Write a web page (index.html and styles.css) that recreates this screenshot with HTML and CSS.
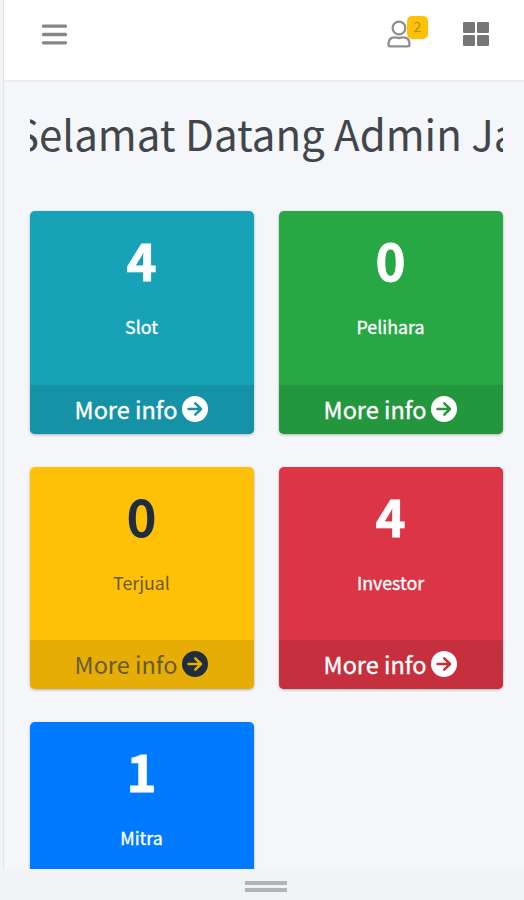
FILE: index.html
```html
<!DOCTYPE html>
<html lang="id">
<head>
<meta charset="utf-8">
<title>Dashboard Admin</title>
<link rel="stylesheet" href="styles.css">
</head>
<body>
<svg class="defs" width="0" height="0" aria-hidden="true">
  <symbol id="arrow" viewBox="0 0 26 26">
    <circle cx="13" cy="13" r="13" fill="currentColor"/>
    <path d="M6.500 13H18.500M13.300 7.300L19 13L13.300 18.700" fill="none" stroke="var(--foot)" stroke-width="2.5" stroke-linecap="round" stroke-linejoin="round"/>
  </symbol>
</svg>
<div class="screen">
  <header class="navbar">
    <svg class="menu" viewBox="0 0 24 22"><path d="M1.5 3H22.5M1.5 11H22.5M1.5 19H22.5" stroke="#868686" stroke-width="3.2" stroke-linecap="round"/></svg>
    <div class="actions">
      <div class="user">
        <svg viewBox="0 0 24 28"><g fill="none" stroke="#8f8f8f" stroke-width="2.3"><circle cx="12" cy="8" r="6.4"/><path d="M1.5 24.5C1.5 19.5 4 17.3 7.5 17.3C9.5 17.3 10 18 12 18C14 18 14.500 17.300 16.500 17.300C20 17.300 22.500 19.500 22.500 24.500Q22.500 26.300 20.700 26.300H3.300Q1.500 26.300 1.500 24.500Z"/></g></svg>
        <span class="badge">2</span>
      </div>
      <svg class="grid-icon" viewBox="0 0 26 24"><g fill="#777"><rect width="12" height="11" rx="1.200"/><rect x="14" width="12" height="11" rx="1.200"/><rect y="13" width="12" height="11" rx="1.200"/><rect x="14" y="13" width="12" height="11" rx="1.200"/></g></svg>
    </div>
  </header>
  <main class="content">
    <div class="marquee"><span>Selamat Datang Admin Ja</span></div>
    <div class="cards">
      <section class="card info"><div class="inner"><h3>4</h3><p>Slot</p></div><a class="more">More info <svg><use href="#arrow"/></svg></a></section>
      <section class="card success"><div class="inner"><h3>0</h3><p>Pelihara</p></div><a class="more">More info <svg><use href="#arrow"/></svg></a></section>
      <section class="card warning"><div class="inner"><h3>0</h3><p>Terjual</p></div><a class="more">More info <svg><use href="#arrow"/></svg></a></section>
      <section class="card danger"><div class="inner"><h3>4</h3><p>Investor</p></div><a class="more">More info <svg><use href="#arrow"/></svg></a></section>
      <section class="card primary"><div class="inner"><h3>1</h3><p>Mitra</p></div></section>
    </div>
  </main>
</div>
<footer class="handle"><i></i><i></i></footer>
</body>
</html>
```
FILE: styles.css
```css
* { box-sizing: border-box; }
body {
  margin: 0;
  height: 900px;
  overflow: hidden;
  background: #f1f3f4;
  font-family: "Noto Sans CJK SC", "Noto Sans", sans-serif;
  color: #40464b;
}
.defs { display: block; }
.screen {
  height: 869px;
  margin-left: 3px;
  overflow: hidden;
  background: #f4f6f9;
  border-left: 1px solid #e2e3e5;
}
.navbar {
  height: 82px;
  padding: 0 35px 0 38px;
  display: flex;
  justify-content: space-between;
  align-items: flex-start;
  background: #fff;
  border-bottom: 2px solid #e9ebed;
}
.menu { width: 25px; height: 23px; margin-top: 23px; }
.actions { display: flex; align-items: flex-start; gap: 49px; }
.user { position: relative; width: 24px; height: 28px; margin-top: 20px; margin-right: 3px; }
.user svg { display: block; width: 24px; height: 28px; }
.badge {
  position: absolute;
  left: 20px;
  top: -4px;
  width: 21px;
  height: 23px;
  border-radius: 5px;
  background: #ffc107;
  color: #b98f14;
  font-size: 14px;
  line-height: 21px;
  text-align: center;
}
.grid-icon { width: 26px; height: 24px; margin-top: 22px; }
.content { padding: 19px 21px 0 26px; }
.marquee {
  height: 70px;
  margin-bottom: 40px;
  overflow: hidden;
  white-space: nowrap;
  font-size: 42px;
  line-height: 64px;
}
.marquee span { display: inline-block; margin-left: -16px; }
.cards { display: grid; grid-template-columns: 224px 224px; column-gap: 25px; row-gap: 33px; }
.card {
  height: 222.500px;
  border-radius: 5px;
  overflow: hidden;
  display: flex;
  flex-direction: column;
  color: #fff;
  background: var(--bg);
  box-shadow: 0 1px 3px rgba(0, 0, 0, .28);
  -webkit-text-stroke: .35px currentColor;
}
.inner { flex: 1; text-align: center; padding-right: 1px; }
h3 { margin: 22px 0 0; font-size: 51px; line-height: 52px; font-weight: 700; -webkit-text-stroke: .8px currentColor; }
p { margin: 28px 0 0; font-size: 17.800px; line-height: 26px; }
.more {
  height: 49px;
  padding: 0 1px 1px 0;
  display: flex;
  align-items: center;
  justify-content: center;
  gap: 5px;
  font-size: 23.500px;
  line-height: 48px;
  background: var(--foot);
}
.more svg { width: 26px; height: 26px; }
.info { --bg: #17a2b8; --foot: #1592a6; }
.success { --bg: #28a745; --foot: #24963e; }
.warning { --bg: #ffc107; --foot: #e5ad06; color: #1f2d3d; -webkit-text-stroke: 0; }
.warning h3 { -webkit-text-stroke: 0; }
.warning p, .warning .more { color: #695b2a; }
.warning .more svg { color: #1f2d3d; }
.danger { --bg: #dc3545; --foot: #c6303e; }
.primary { --bg: #007bff; --foot: #006fe6; }
.handle {
  height: 31px;
  padding: 12px 0 0 245px;
  display: flex;
  flex-direction: column;
  gap: 3px;
}
.handle i { width: 42px; height: 4px; background: #b3b4b5; }
```
